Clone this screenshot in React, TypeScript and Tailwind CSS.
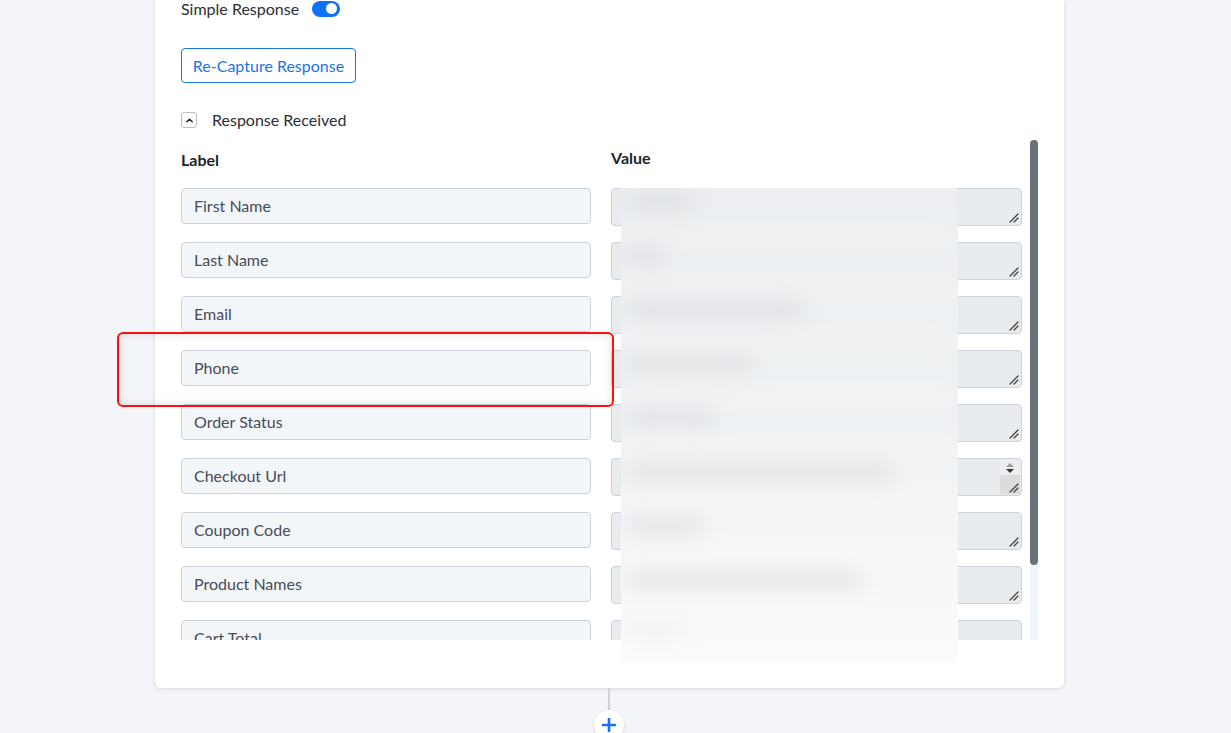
import React from "react";

const labels = [
  "First Name",
  "Last Name",
  "Email",
  "Phone",
  "Order Status",
  "Checkout Url",
  "Coupon Code",
  "Product Names",
  "Cart Total",
];

const smudges = [70, 40, 180, 130, 90, 270, 80, 240, 60];

function Grip() {
  return (
    <svg width="12" height="12" viewBox="0 0 12 12" className="absolute right-[2px] bottom-[2px]">
      <path d="M3 11 L11 3 M7 11 L11 7" stroke="#444" strokeWidth="1.3" strokeLinecap="round" />
    </svg>
  );
}

export default function App() {
  return (
    <div
      className="relative w-[1231px] h-[733px] overflow-hidden bg-[#f3f5f8]"
      style={{ fontFamily: "Lato, 'Open Sans', sans-serif" }}
    >
      <div className="ml-[155px] w-[909px] h-[688px] bg-white rounded-b-[6px] shadow-[0_1px_4px_rgba(0,0,0,0.12)] pl-[26px] flex flex-col">
        <div className="flex items-center h-[17px] gap-[13px]">
          <span className="text-[16px] leading-[17px] text-[#2b2f36]">Simple Response</span>
          <div className="w-[28px] h-[16px] rounded-full bg-[#0b73f5] flex items-center justify-end pr-[3px]">
            <div className="w-[11px] h-[11px] rounded-full bg-white" />
          </div>
        </div>
        <div className="mt-[31px] w-[175px] h-[35px] border border-[#1b74e4] rounded-[4px] flex items-center justify-center text-[16px] text-[#1b74e4]">
          Re-Capture Response
        </div>
        <div className="mt-[29px] flex items-center h-[16px] gap-[15px]">
          <div className="w-[16px] h-[16px] border border-[#b9bec7] rounded-[3px] flex items-center justify-center">
            <svg width="9" height="9" viewBox="0 0 10 10">
              <path d="M2 6.5 L5 3.5 L8 6.5" stroke="#222" strokeWidth="1.6" fill="none" strokeLinecap="round" strokeLinejoin="round" />
            </svg>
          </div>
          <span className="text-[16px] leading-[18px] text-[#2b2f36]">Response Received</span>
        </div>
        <div className="mt-[12px] h-[500px] w-[857px] flex gap-[8px] overflow-hidden">
          <div className="w-[841px] grid grid-cols-[410px_411px] gap-x-[20px]">
            <div className="flex flex-col">
              <div className="h-[48px] pt-[11px] text-[16px] leading-[18px] font-bold text-[#212529]">Label</div>
              {labels.map((l) => (
                <div
                  key={l}
                  className="shrink-0 h-[36px] mb-[18px] bg-[#f3f6f9] border border-[#cdd2da] rounded-[4px] flex items-center px-[12px] text-[16px] leading-[18px] pb-[1px] text-[#464c58]"
                >
                  {l}
                </div>
              ))}
            </div>
            <div className="flex flex-col">
              <div className="h-[48px] pt-[9px] text-[16px] leading-[18px] font-bold text-[#212529]">Value</div>
              {labels.map((l, i) => (
                <div
                  key={l}
                  className="relative shrink-0 h-[38px] mb-[16px] bg-[#e9ecef] border border-[#cdd2da] rounded-[4px]"
                >
                  {i === 5 && (
                    <>
                      <div className="absolute right-[1px] top-[1px] w-[20px] h-[16px] bg-[#eceef1] flex flex-col items-center justify-center gap-[2px]">
                        <svg width="8" height="4" viewBox="0 0 8 4"><path d="M0 4 L4 0 L8 4Z" fill="#999" /></svg>
                        <svg width="8" height="4" viewBox="0 0 8 4"><path d="M0 0 L4 4 L8 0Z" fill="#333" /></svg>
                      </div>
                      <div className="absolute right-[1px] bottom-[1px] w-[20px] h-[19px] bg-[#dcdcdc]" />
                    </>
                  )}
                  <Grip />
                </div>
              ))}
            </div>
          </div>
          <div className="w-[8px] h-full flex flex-col bg-[#eef5fe]">
            <div className="h-[425px] rounded-full bg-[#6b7079]" />
          </div>
        </div>
      </div>

      {/* blurred overlay */}
      <div className="absolute left-[621px] top-[188px] w-[337px] h-[474px] backdrop-blur-md bg-gradient-to-b from-[#eceef0]/95 via-[#eff1f3]/95 to-[#fafafa]/95 overflow-hidden">
        {smudges.map((w, i) => (
          <div
            key={i}
            className="absolute left-[4px] h-[16px] rounded-full bg-[#cfd2d6]/50 blur-[10px]"
            style={{ top: 6 + i * 54, width: w }}
          />
        ))}
        <div className="absolute left-0 right-0 bottom-0 h-[60px] bg-gradient-to-b from-transparent to-[#fbfbfb]" />
      </div>

      {/* highlight */}
      <div className="absolute left-[117px] top-[332px] w-[497px] h-[75px] border-2 border-[#ff1010] rounded-[6px] shadow-[inset_0_0_10px_rgba(0,0,0,0.12)]" />

      {/* connector */}
      <div className="absolute left-[608px] top-[688px] w-[2px] h-[24px] bg-[#cfd3d9]" />
      <div className="absolute left-[594px] top-[710px] w-[30px] h-[30px] rounded-full bg-white shadow-[0_1px_3px_rgba(0,0,0,0.15)] flex items-center justify-center">
        <svg width="14" height="14" viewBox="0 0 14 14">
          <path d="M7 1 V13 M1 7 H13" stroke="#1470f5" strokeWidth="2.6" strokeLinecap="round" />
        </svg>
      </div>
    </div>
  );
}
